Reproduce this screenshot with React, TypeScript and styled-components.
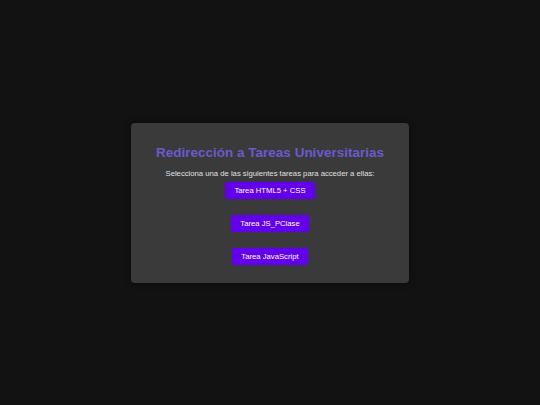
import React from "react";
import styled, { createGlobalStyle } from "styled-components";

const GlobalStyle = createGlobalStyle`
	html, body {
		margin: 0;
		padding: 0;
		height: 100%;
		background-color: #121212;
		font-family: "Liberation Sans", Arial, sans-serif;
	}
	#root {
		height: 100%;
	}
`;

const Page = styled.div`
	height: 100%;
	display: flex;
	align-items: center;
	justify-content: center;
`;

const Card = styled.div`
	width: 278px;
	box-sizing: border-box;
	padding: 21px 10px 18px;
	background-color: #3a3a3a;
	border-radius: 4px;
	box-shadow: 0 0 6px rgba(0, 0, 0, 0.5);
	text-align: center;
`;

const Title = styled.h1`
	margin: 0 0 8px;
	font-size: 13.5px;
	line-height: 17px;
	font-weight: bold;
	color: #6a5acd;
`;

const Subtitle = styled.p`
	margin: 0 0 4px;
	font-size: 7.7px;
	line-height: 9px;
	color: #e0e0e0;
`;

const Links = styled.div`
	display: flex;
	flex-direction: column;
	align-items: center;
	gap: 16px;
`;

const TaskLink = styled.a`
	display: inline-block;
	padding: 4px 9px;
	font-size: 7.7px;
	line-height: 9px;
	color: #ffffff;
	background-color: #6200ea;
	border-radius: 2px;
	text-decoration: none;
	box-shadow: 0 0 3px rgba(98, 0, 234, 0.4);
`;

const tasks = ["Tarea HTML5 + CSS", "Tarea JS_PClase", "Tarea JavaScript"];

const App: React.FC = () => {
	return (
		<>
			<GlobalStyle />
			<Page>
				<Card>
					<Title>Redirección a Tareas Universitarias</Title>
					<Subtitle>Selecciona una de las siguientes tareas para acceder a ellas:</Subtitle>
					<Links>
						{tasks.map((task, index) => (
							<TaskLink href="#" key={index}>
								{task}
							</TaskLink>
						))}
					</Links>
				</Card>
			</Page>
		</>
	);
};

export default App;
